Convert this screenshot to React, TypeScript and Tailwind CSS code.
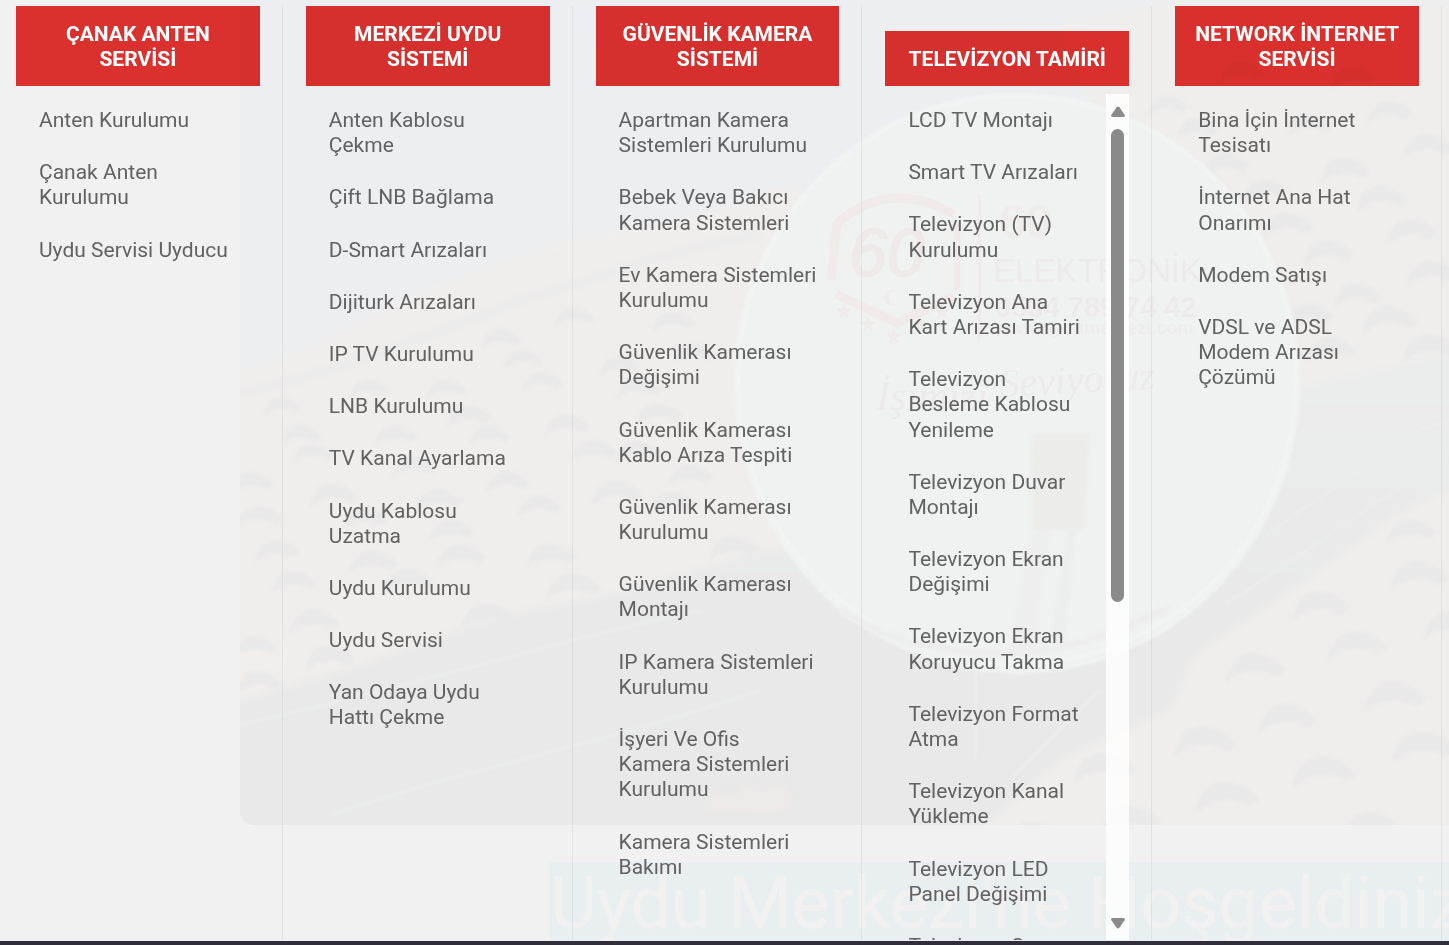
type Category = { title: string; items: string[]; scrollable?: boolean };

const categories: Category[] = [
  {
    title: 'ÇANAK ANTEN SERVİSİ',
    items: ['Anten Kurulumu', 'Çanak Anten Kurulumu', 'Uydu Servisi Uyducu'],
  },
  {
    title: 'MERKEZİ UYDU SİSTEMİ',
    items: [
      'Anten Kablosu Çekme',
      'Çift LNB Bağlama',
      'D-Smart Arızaları',
      'Dijiturk Arızaları',
      'IP TV Kurulumu',
      'LNB Kurulumu',
      'TV Kanal Ayarlama',
      'Uydu Kablosu Uzatma',
      'Uydu Kurulumu',
      'Uydu Servisi',
      'Yan Odaya Uydu Hattı Çekme',
    ],
  },
  {
    title: 'GÜVENLİK KAMERA SİSTEMİ',
    items: [
      'Apartman Kamera Sistemleri Kurulumu',
      'Bebek Veya Bakıcı Kamera Sistemleri',
      'Ev Kamera Sistemleri Kurulumu',
      'Güvenlik Kamerası Değişimi',
      'Güvenlik Kamerası Kablo Arıza Tespiti',
      'Güvenlik Kamerası Kurulumu',
      'Güvenlik Kamerası Montajı',
      'IP Kamera Sistemleri Kurulumu',
      'İşyeri Ve Ofis Kamera\u00a0Sistemleri Kurulumu',
      'Kamera Sistemleri Bakımı',
    ],
  },
  {
    title: 'TELEVİZYON TAMİRİ',
    scrollable: true,
    items: [
      'LCD TV Montajı',
      'Smart TV Arızaları',
      'Televizyon (TV) Kurulumu',
      'Televizyon Ana Kart Arızası Tamiri',
      'Televizyon Besleme Kablosu Yenileme',
      'Televizyon Duvar Montajı',
      'Televizyon Ekran Değişimi',
      'Televizyon Ekran Koruyucu Takma',
      'Televizyon Format Atma',
      'Televizyon Kanal Yükleme',
      'Televizyon LED Panel Değişimi',
      'Televizyon Ses',
    ],
  },
  {
    title: 'NETWORK İNTERNET SERVİSİ',
    items: [
      'Bina İçin İnternet Tesisatı',
      'İnternet Ana Hat Onarımı',
      'Modem Satışı',
      'VDSL ve ADSL Modem Arızası Çözümü',
    ],
  },
];

// Shadows under the roof tiles: x, y, scale.
const tileShadows: [number, number, number][] = [
  [262, 396, 0.9], [281, 424, 0.9], [350, 378, 0.9], [426, 378, 0.9], [446, 404, 1],
  [481, 328, 0.9], [503, 349, 0.9], [522, 371, 0.9], [375, 425, 0.9], [469, 425, 0.9],
  [544, 413, 1], [293, 443, 0.9], [391, 455, 1], [485, 470, 1], [571, 439, 1],
  [232, 472, 0.9], [309, 482, 1.1], [415, 488, 1], [517, 494, 1], [236, 505, 1],
  [342, 507, 1], [428, 519, 1], [591, 480, 1.1], [254, 539, 1], [348, 549, 1.1],
  [436, 543, 1.1], [526, 543, 1.1], [271, 570, 1], [289, 609, 1.1], [383, 568, 1.1],
  [460, 602, 1.2], [305, 645, 1.1], [232, 635, 1], [236, 670, 1], [554, 306, 0.9],
  [599, 355, 0.9], [615, 376, 1], [652, 311, 0.9], [667, 464, 1], [636, 402, 1],
  [673, 343, 0.9], [709, 535, 1.1], [615, 441, 1], [648, 490, 1.1], [546, 572, 1.2],
  [1147, 95, 0.9], [1177, 118, 0.9], [1203, 153, 1], [1243, 178, 1], [1320, 157, 1.1],
  [1287, 113, 1], [1367, 100, 1], [1403, 133, 1.1], [1357, 185, 1.1], [1263, 212, 1.1],
  [1387, 218, 1.1], [1303, 240, 1.1], [1333, 282, 1.1], [1407, 260, 1.1], [1363, 305, 1.2],
  [1287, 303, 1], [1403, 333, 1.2], [1307, 337, 1.1], [1220, 60, 1], [1330, 66, 1],
  [1292, 590, 1.3], [1390, 560, 1.3], [1386, 518, 1.1], [1328, 630, 1.3], [1226, 652, 1.3],
  [1363, 680, 1.4], [1423, 610, 1.3], [1258, 703, 1.3], [1173, 725, 1.4], [1392, 730, 1.4],
  [1292, 755, 1.4], [1195, 780, 1.4], [1073, 753, 1.3], [1006, 820, 1.2], [1101, 805, 1.3],
  [1340, 810, 1.4],
];

const stars: [number, number][] = [[844, 311], [868, 324], [894, 336], [920, 324], [942, 311]];

function RoofScene() {
  return (
    <svg
      className="absolute top-0 left-[240px] h-[825px] w-[1209px] rounded-bl-[14px]"
      viewBox="240 0 1209 825"
      aria-hidden="true"
    >
      <defs>
        <linearGradient id="sky" x1="0" y1="0" x2="0" y2="1">
          <stop offset="0" stopColor="#eceef1" />
          <stop offset="1" stopColor="#eceff0" />
        </linearGradient>
        <linearGradient id="ground" x1="0" y1="0" x2="0" y2="1">
          <stop offset="0" stopColor="#ebecec" />
          <stop offset="0.5" stopColor="#e9e9e9" />
        </linearGradient>
        <filter id="soft" x="-10%" y="-10%" width="120%" height="120%" colorInterpolationFilters="sRGB">
          <feGaussianBlur stdDeviation="5" />
        </filter>
        <filter id="softer" x="-10%" y="-10%" width="120%" height="120%" colorInterpolationFilters="sRGB">
          <feGaussianBlur stdDeviation="1.5" />
        </filter>
      </defs>
      <rect x="240" width="1209" height="825" fill="url(#sky)" />
      <g filter="url(#soft)">
        <path d="M220 376 L300 350 L420 290 L560 240 L700 215 L800 180 V720 H220Z" fill="#f0eeed" />
        <path d="M220 398 C320 378 420 340 520 300 C600 280 660 250 760 235" fill="none" stroke="#ebebeb" strokeWidth="9" />
        <path d="M1060 20 L1170 0 H1470 V420 H1200Z" fill="#efeeed" />
        <path d="M220 705 L350 668 L500 615 L620 592 L770 548 L900 560 H1240 L1300 388 L1470 348 V850 H220Z" fill="url(#ground)" />
        <path d="M1470 478 L1390 520 L1300 585 L1195 655 L1170 710 L1060 760 L960 850 H1470Z" fill="#f0eeed" />
        <path d="M220 640 L290 650 L270 690 L220 695Z" fill="#f2eeec" />
      </g>
      <g filter="url(#softer)" fill="#eae9ea">
        {tileShadows.map(([x, y, scale]) => (
          <path
            key={`${x}-${y}`}
            transform={`translate(${x} ${y}) scale(${scale})`}
            d="M0 24 C2 6 13 -1 24 1 C34 2 42 8 46 13 C44 18 39 20 35 18 C25 12 11 15 0 24Z"
          />
        ))}
      </g>
      <g filter="url(#softer)" fill="none" stroke="#ebecec" strokeWidth="3">
        <path d="M240 725 C400 690 520 650 700 610" />
        <path d="M330 815 C460 770 620 740 760 690" />
        <path d="M1265 535 L1420 430 L1449 420" />
        <path d="M1225 605 L1449 455" />
        <path d="M975 650 V760" />
        <path d="M1100 690 L1010 780" />
      </g>
      <path d="M700 810 l20 -18 l15 8 l12 -20 l14 16 l16 -14 l14 10 l-6 20Z" fill="#ede9e8" filter="url(#soft)" />
      <ellipse cx="1017" cy="384" rx="283" ry="290" fill="#f0f1f1" filter="url(#softer)" />
      <ellipse cx="1017" cy="380" rx="279" ry="284" fill="none" stroke="#f2f3f3" strokeWidth="5" filter="url(#softer)" />
      <path d="M840 610 C930 668 1060 668 1170 606" fill="none" stroke="#ecedec" strokeWidth="7" filter="url(#softer)" />
      <g filter="url(#softer)">
        <path d="M1031 434 H1090 L1084 530 H1032Z" fill="#ecedeb" />
        <path d="M1032 530 H1050 L1030 655 L1008 650Z" fill="#edeeed" />
        <path d="M1068 530 H1076 L1064 640 H1050Z" fill="#eceded" />
      </g>
      <g fill="none" stroke="#f0eaea" strokeWidth="9">
        <path d="M831 280 L837 224 Q887 178 954 214" />
        <path d="M957 222 V290" strokeWidth="7" />
        <path d="M836 294 L897 323 L955 296" />
      </g>
      <g fill="#f0ebeb">
        {stars.map(([x, y]) => (
          <path key={x} transform={`translate(${x} ${y})`} d="M0 -8 L2 -3 L8 -2 L3 2 L5 8 L0 4 L-5 8 L-3 2 L-8 -2 L-2 -3Z" />
        ))}
        <path d="M896 291 A8 8 0 1 0 896 305 A7 7 0 1 1 896 291Z" />
        <rect x="978" y="195" width="3" height="145" />
      </g>
      <g className="font-['Liberation_Sans',sans-serif]" fill="#edeaeb">
        <text x="849" y="276" fontSize="68" fontStyle="italic" fill="#efeaea" stroke="#efeaea" strokeWidth="2">60</text>
        <text x="999" y="238" fontSize="48" fontWeight="700" fill="#efedec">60</text>
        <text x="993" y="282" fontSize="33">ELEKTRONİK</text>
        <text x="995" y="317" fontSize="29" fontWeight="700">0534 789 74 42</text>
        <text x="995" y="334" fontSize="18" fontWeight="700" fill="#eeecec">www.uydumerkezi.com</text>
      </g>
      <g className="font-['Liberation_Serif',serif]" fill="#edeaea" fontStyle="italic">
        <text x="876" y="410" fontSize="42">İşimizi</text>
        <text transform="translate(1000 397) rotate(-3)" fontSize="40">Seviyoruz</text>
      </g>
    </svg>
  );
}

function Backdrop() {
  return (
    <div className="absolute inset-0 -z-10 overflow-hidden" aria-hidden="true">
      <RoofScene />
      <p className="absolute top-[862px] left-[550px] bg-[#e9eff1] text-[72px] leading-[84px] whitespace-nowrap text-[#f1f1f1]">
        Uydu Merkezi'ne Hoşgeldiniz
      </p>
    </div>
  );
}

function Scrollbar() {
  return (
    <div className="flex w-[23px] shrink-0 flex-col items-center bg-white/80">
      <button type="button" aria-label="Yukarı kaydır" className="flex h-[35px] w-full items-center justify-center">
        <svg width="16" height="12" viewBox="0 0 16 12" fill="#8b8b8b">
          <path d="M6.6 1.2 Q8 0 9.4 1.2 L14.8 9 Q15.4 11 13.6 11 H2.4 Q0.6 11 1.2 9Z" />
        </svg>
      </button>
      <div className="min-h-0 w-[13px] flex-1">
        <div className="h-[61%] w-full rounded-full bg-black/45" />
      </div>
      <button type="button" aria-label="Aşağı kaydır" className="flex h-[35px] w-full items-center justify-center">
        <svg width="16" height="12" viewBox="0 0 16 12" fill="#8b8b8b">
          <path d="M6.6 10.8 Q8 12 9.4 10.8 L14.8 3 Q15.4 1 13.6 1 H2.4 Q0.6 1 1.2 3Z" />
        </svg>
      </button>
    </div>
  );
}

function CategoryColumn({ title, items, scrollable }: Category) {
  return (
    <section className="flex min-h-0 flex-col border-r border-black/5 pr-[22px] pl-[23px]">
      <div className="flex h-20 shrink-0 items-end">
        <h2 className="relative w-full px-4 pt-4 pb-[14px] text-center text-[21px] leading-[25px] font-bold text-white">
          <span className="absolute inset-0 bg-[#e83330] mix-blend-multiply" />
          <span className="relative">{title}</span>
        </h2>
      </div>
      <div className="mt-2 flex min-h-0 flex-1">
        <ul className="flex min-w-0 flex-1 flex-col gap-[27px] overflow-hidden pt-[14px] pr-[21px] pl-[23px] text-[21px] leading-[1.2] text-[#626262]">
          {items.map((item) => (
            <li key={item}>
              <a href="#" className="block hover:text-[#d9312e]">{item}</a>
            </li>
          ))}
        </ul>
        {scrollable && <Scrollbar />}
      </div>
    </section>
  );
}

export default function App() {
  return (
    <div className="relative isolate flex h-screen flex-col overflow-hidden bg-[#f1f1f1] font-['Roboto',sans-serif]">
      <Backdrop />
      <nav className="mr-[7px] -ml-[7px] grid min-h-0 flex-1 grid-cols-5 grid-rows-1 pt-[6px] pb-px">
        {categories.map((category) => (
          <CategoryColumn key={category.title} {...category} />
        ))}
      </nav>
      <div className="h-1 shrink-0 bg-[#2f2e3a]" />
    </div>
  );
}
